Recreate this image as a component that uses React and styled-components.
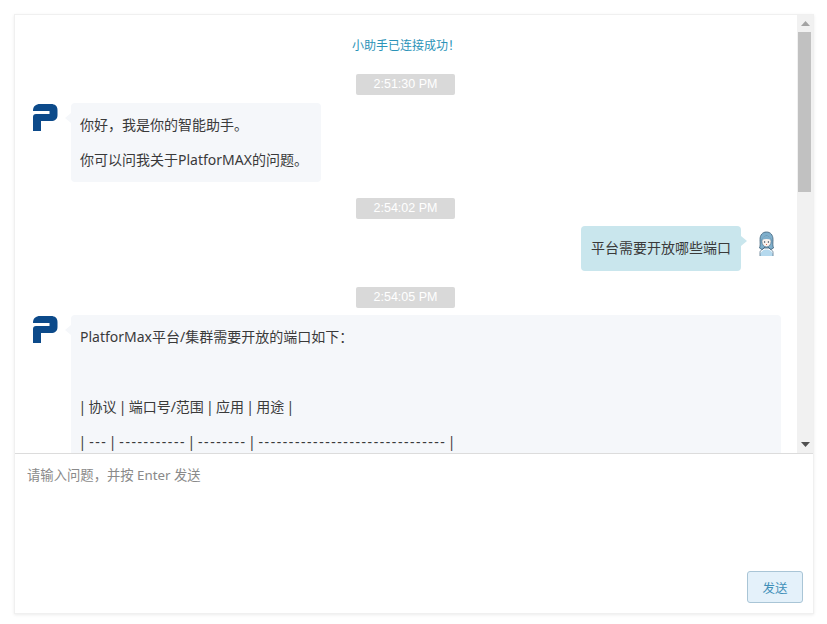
import styled, { createGlobalStyle } from "styled-components";

const GlobalStyle = createGlobalStyle`
  html, body {
    margin: 0;
    padding: 0;
    background: #fff;
    font-family: "Noto Sans", "Noto Sans CJK SC", sans-serif;
    color: #3a3a3a;
  }
  * {
    box-sizing: border-box;
  }
`;

const Page = styled.div`
  width: 827px;
  height: 624px;
  padding: 14px 13px 10px 14px;
`;

const Card = styled.div`
  display: flex;
  flex-direction: column;
  width: 800px;
  height: 600px;
  border: 1px solid #f0f0f0;
  box-shadow: 0 1px 3px rgba(0, 0, 0, 0.08);
`;

const ChatPane = styled.div`
  display: flex;
  height: 439px;
  border-bottom: 1px solid #dcdcdc;
  overflow: hidden;
`;

const MessageList = styled.div`
  flex: 1;
  min-width: 0;
  display: flex;
  flex-direction: column;
  padding-top: 21px;
`;

const Status = styled.div`
  align-self: center;
  height: 20px;
  margin-bottom: 2px;
  font-size: 12px;
  line-height: 20px;
  color: #2b93b8;
`;

const TimeStamp = styled.div`
  align-self: center;
  flex: none;
  width: 99px;
  height: 21px;
  margin: 16px 1px ${(p) => p.$after || 7}px 0;
  background: #d9d9d9;
  border-radius: 2px;
  font-family: "Liberation Sans", sans-serif;
  font-size: 12.5px;
  line-height: 21px;
  text-align: center;
  color: #fff;
`;

const Row = styled.div`
  flex: none;
  display: flex;
  justify-content: ${(p) => (p.$mine ? "flex-end" : "flex-start")};
  align-items: flex-start;
  gap: ${(p) => (p.$mine ? "14px" : "13px")};
  padding: 0 ${(p) => (p.$mine ? "19px" : "16px")} 0 18px;
`;

const Avatar = styled.div`
  flex: none;
  width: ${(p) => (p.$mine ? "23px" : "25px")};
  height: 28px;
  margin-top: ${(p) => (p.$mine ? "4px" : "0")};
  line-height: 0;
`;

const Bubble = styled.div`
  position: relative;
  padding: ${(p) => (p.$mine ? "12px 10px 13px" : "12px 13px 12px 9px")};
  border-radius: 4px;
  background: ${(p) => (p.$mine ? "#c9e6ed" : "#f5f7fa")};
  font-size: 14px;
  line-height: 20px;
  flex: ${(p) => (p.$wide ? "1" : "none")};

  &::after {
    content: "";
    position: absolute;
    top: 10px;
    ${(p) => (p.$mine ? "right: -6px;" : "left: -6px;")}
    border-style: solid;
    border-width: 5px ${(p) => (p.$mine ? "0" : "6px")} 5px ${(p) => (p.$mine ? "6px" : "0")};
    border-color: transparent ${(p) => (p.$mine ? "transparent" : "#f5f7fa")} transparent ${(p) => (p.$mine ? "#c9e6ed" : "transparent")};
  }
`;

const Line = styled.p`
  margin: 0 0 15px;
  min-height: 20px;
  white-space: nowrap;

  &:last-child {
    margin-bottom: 0;
  }
`;

// the pipe rows of the markdown table set tighter than normal text
const TableLine = styled(Line)`
  word-spacing: -1.4px;
  text-indent: -1.5px;
`;

const DashLine = styled(Line)`
  letter-spacing: 1.55px;
  word-spacing: -3.8px;
  text-indent: -1.5px;
`;

const ScrollTrack = styled.div`
  flex: none;
  display: flex;
  flex-direction: column;
  align-items: flex-start;
  width: 16px;
  padding-left: 1px;
  background: #f1f1f1;
`;

const ScrollButton = styled.div`
  flex: none;
  display: flex;
  justify-content: center;
  align-items: center;
  width: 14px;
  height: 17px;
  line-height: 0;
`;

const ScrollThumb = styled.div`
  flex: none;
  width: 13px;
  height: 160px;
  background: #c1c1c1;
`;

const ScrollSpacer = styled.div`
  flex: 1;
`;

const InputPane = styled.div`
  flex: 1;
  display: flex;
  flex-direction: column;
  padding: 10px 10px 10px 12px;
`;

const Input = styled.textarea`
  flex: 1;
  width: 100%;
  padding: 0;
  border: 0;
  outline: 0;
  resize: none;
  font-family: inherit;
  font-size: 13.33px;
  line-height: 22px;
  color: #333;

  &::placeholder {
    color: #8a8a8a;
    opacity: 1;
  }
`;

const Actions = styled.div`
  display: flex;
  justify-content: flex-end;
`;

const SendButton = styled.button`
  width: 56px;
  height: 32px;
  padding: 0;
  border: 1px solid #a9c5d6;
  border-radius: 3px;
  background: #e4f1fa;
  font-family: inherit;
  font-size: 12.5px;
  color: #3f8fb8;
`;

const BotLogo = () => (
  <svg width="25" height="28" viewBox="33 103 25 28">
    <path
      fill="#0c4a8a"
      d="M33 111C33 106 36 104 40 104H51C55 104 57.500 106 57.500 110V115C57.500 119 55 121 51 121H41V131H33V117C33 115 34 114 36 114H49.500V111Z"
    />
  </svg>
);

const UserAvatar = () => (
  <svg width="23" height="28" viewBox="0 0 23 28">
    <path fill="#b5d9ee" d="M5 26C5 22 7.500 19.500 11.500 19.500S18 22 18 26Z" />
    <path fill="#7fafcc" stroke="#3d5f78" strokeWidth="0.8" d="M11.500 2C7.500 2 5 5 5 9.500C5 13 5.500 15.500 4.500 18L7 19.500L9 18H14L16 19.500L18.500 18C17.500 15.500 18 13 18 9.500C18 5 15.500 2 11.500 2Z" />
    <ellipse cx="11.500" cy="11.500" rx="4.600" ry="5.400" fill="#fbf3ee" stroke="#3d5f78" strokeWidth="0.6" />
    <path fill="#7fafcc" d="M6.900 10C7.500 7 9.300 6 11.500 6S15.500 7 16.100 10C13.500 8.700 9.500 8.700 6.900 10Z" />
    <circle cx="9.600" cy="12" r="0.700" fill="#2c3e50" />
    <circle cx="13.400" cy="12" r="0.700" fill="#2c3e50" />
    <path stroke="#d9603f" strokeWidth="0.9" d="M11 14.500H12" />
    <path fill="none" stroke="#3d5f78" strokeWidth="0.7" d="M5 26V22.500C5 21 6 20 7.500 19.500L10 17M18 26V22.500C18 21 17 20 15.500 19.500L13 17" />
  </svg>
);

const ArrowUp = () => (
  <svg width="9" height="5" viewBox="0 0 9 5">
    <path fill="#a3a3a3" d="M4.500 0L9 5H0Z" />
  </svg>
);

const ArrowDown = () => (
  <svg width="9" height="5" viewBox="0 0 9 5">
    <path fill="#505050" d="M0 0H9L4.500 5Z" />
  </svg>
);

const App = () => {
  return (
    <Page>
      <GlobalStyle />
      <Card>
        <ChatPane>
          <MessageList>
            <Status>小助手已连接成功！</Status>
            <TimeStamp $after={8}>2:51:30 PM</TimeStamp>
            <Row>
              <Avatar>
                <BotLogo />
              </Avatar>
              <Bubble>
                <Line>你好，我是你的智能助手。</Line>
                <Line>你可以问我关于PlatforMAX的问题。</Line>
              </Bubble>
            </Row>
            <TimeStamp>2:54:02 PM</TimeStamp>
            <Row $mine>
              <Bubble $mine>平台需要开放哪些端口</Bubble>
              <Avatar $mine>
                <UserAvatar />
              </Avatar>
            </Row>
            <TimeStamp>2:54:05 PM</TimeStamp>
            <Row>
              <Avatar>
                <BotLogo />
              </Avatar>
              <Bubble $wide>
                <Line>PlatforMax平台/集群需要开放的端口如下：</Line>
                <Line />
                <TableLine>| 协议 | 端口号/范围 | 应用 | 用途 |</TableLine>
                <DashLine>| --- | ----------- | -------- | ------------------------------- |</DashLine>
                <Line />
              </Bubble>
            </Row>
          </MessageList>
          <ScrollTrack>
            <ScrollButton>
              <ArrowUp />
            </ScrollButton>
            <ScrollThumb />
            <ScrollSpacer />
            <ScrollButton>
              <ArrowDown />
            </ScrollButton>
          </ScrollTrack>
        </ChatPane>
        <InputPane>
          <Input placeholder="请输入问题，并按 Enter 发送" />
          <Actions>
            <SendButton>发送</SendButton>
          </Actions>
        </InputPane>
      </Card>
    </Page>
  );
};

export default App;
